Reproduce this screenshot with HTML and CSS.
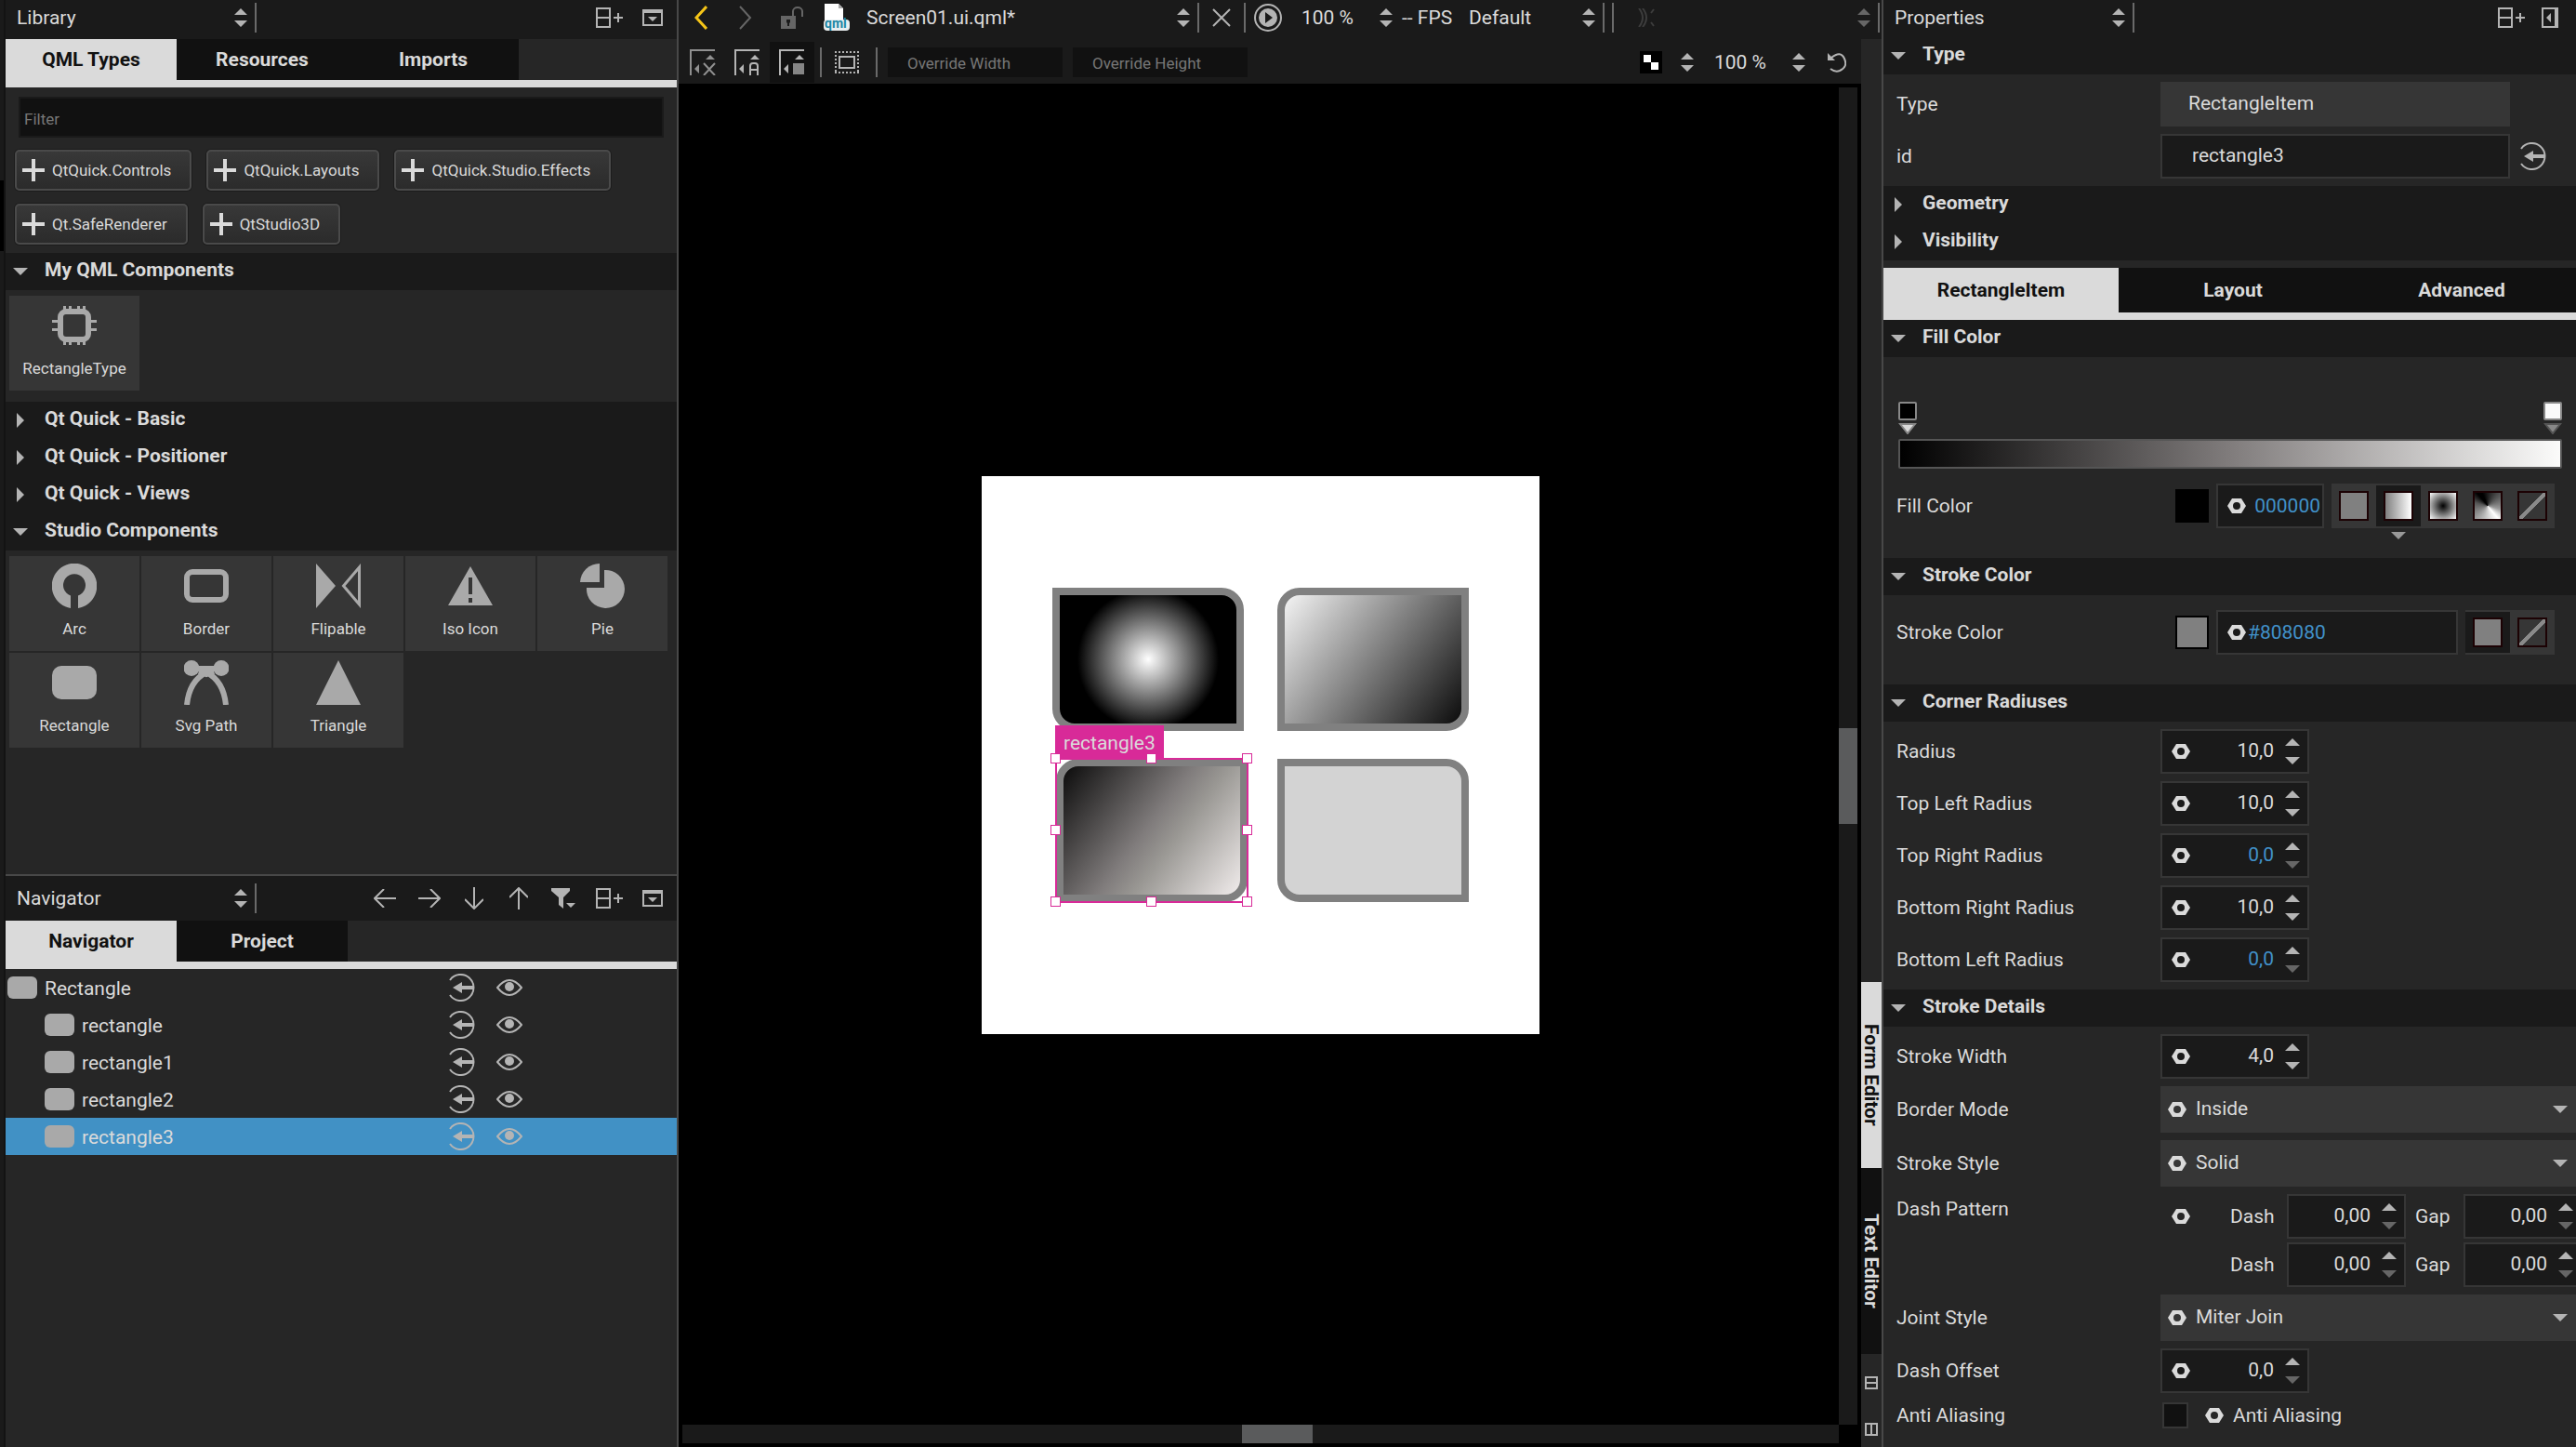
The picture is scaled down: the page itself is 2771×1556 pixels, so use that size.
FILE: index.html
```html
<!DOCTYPE html>
<html lang="en">
<head>
<meta charset="utf-8">
<title>Screen01.ui.qml - Design</title>
<link rel="stylesheet" href="styles.css">
</head>
<body>
<svg class="defs" aria-hidden="true">
  <symbol id="updown" viewBox="0 0 14 20"><path d="M7 0l7 7H0zM0 13h14l-7 7z"/></symbol>
  <symbol id="down" viewBox="0 0 16 8"><path d="M0 0h16L8 8z"/></symbol>
  <symbol id="up" viewBox="0 0 16 8"><path d="M0 8h16L8 0z"/></symbol>
  <symbol id="right" viewBox="0 0 8 16"><path d="M0 0l8 8-8 8z"/></symbol>
  <symbol id="split" viewBox="-4 0 34 24"><path d="M1 2h14v20H1zM1 12h14M19 12h10M24 7v10" fill="none" stroke="currentColor" stroke-width="2"/></symbol>
  <symbol id="minimize" viewBox="0 0 22 18"><path d="M1 1h20v16H1z" fill="none" stroke="currentColor" stroke-width="2"/><path d="M0 0h22v4H0zM6 8h10l-5 5z"/></symbol>
  <symbol id="collapse" viewBox="0 0 18 22"><path d="M1 1h14v20H1z" fill="none" stroke="currentColor" stroke-width="2"/><path d="M14 0h4v22h-4zM10 6v10l-5-5z"/></symbol>
  <symbol id="plus" viewBox="0 0 24 24"><path d="M10 0h4v10h10v4H14v10h-4V14H0v-4h10z"/></symbol>
  <symbol id="arrow" viewBox="0 0 24 20"><path d="M11 0L1 10l10 10M1 10h23" fill="none" stroke="currentColor" stroke-width="2"/></symbol>
  <symbol id="filter" viewBox="0 0 26 22"><path d="M0 0h20v3l-7 7v12l-5-4v-8L0 3zM16 16h10l-5 5z"/></symbol>
  <symbol id="export" viewBox="0 0 32 30"><path d="M2 7a14 14 0 1 1 0 16" fill="none" stroke="currentColor" stroke-width="2"/><path d="M5 15l10-6v4h12v4H15v4z"/></symbol>
  <symbol id="eye" viewBox="0 0 28 18"><path d="M1 9Q14-7 27 9Q14 25 1 9z" fill="none" stroke="currentColor" stroke-width="2"/><circle cx="14" cy="8" r="5"/></symbol>
  <symbol id="hex" viewBox="0 0 20 16"><path fill-rule="evenodd" d="M5 0h10l5 8-5 8H5L0 8zM10 4a4 4 0 1 0 0 8a4 4 0 0 0 0-8z"/></symbol>
</svg>
<div class="app">
  <aside class="left">
    <div class="strip"><i></i></div>
    <div class="dock">
      <section class="library">
        <header class="bar">
          <div class="combo dockname"><select aria-label="Upper view"><option>Library</option></select><svg class="ud"><use href="#updown"/></svg></div>
          <span class="sep"></span><span class="fill"></span>
          <button class="tool" aria-label="Split"><svg width="34" height="24"><use href="#split"/></svg></button>
          <button class="tool" aria-label="Close"><svg width="22" height="18"><use href="#minimize"/></svg></button>
        </header>
        <nav class="tabs"><button class="on">QML Types</button><button>Resources</button><button>Imports</button></nav>
        <div class="filter"><input type="text" placeholder="Filter" aria-label="Filter"></div>
        <div class="imports">
          <button><svg><use href="#plus"/></svg>QtQuick.Controls</button>
          <button><svg><use href="#plus"/></svg>QtQuick.Layouts</button>
          <button><svg><use href="#plus"/></svg>QtQuick.Studio.Effects</button>
          <button><svg><use href="#plus"/></svg>Qt.SafeRenderer</button>
          <button><svg><use href="#plus"/></svg>QtStudio3D</button>
        </div>
        <h2><svg class="tri"><use href="#down"/></svg>My QML Components</h2>
        <div class="tiles">
          <button><svg viewBox="0 0 48 48"><rect x="9" y="9" width="30" height="30" rx="6" fill="none" stroke="currentColor" stroke-width="6"/><path d="M12 3h3v6h-3zM18 3h3v6h-3zM27 3h3v6h-3zM33 3h3v6h-3zM12 39h3v6h-3zM18 39h3v6h-3zM27 39h3v6h-3zM33 39h3v6h-3zM0 18h7v3H0zM0 27h7v3H0zM41 18h7v3h-7zM41 27h7v3h-7z"/></svg>RectangleType</button>
        </div>
        <h2><svg class="tri side"><use href="#right"/></svg>Qt Quick - Basic</h2>
        <h2><svg class="tri side"><use href="#right"/></svg>Qt Quick - Positioner</h2>
        <h2><svg class="tri side"><use href="#right"/></svg>Qt Quick - Views</h2>
        <h2><svg class="tri"><use href="#down"/></svg>Studio Components</h2>
        <div class="tiles">
          <button><svg viewBox="0 0 48 48"><path d="M20 48V34.500a12 12 0 1 1 8 0V48A24.300 24.300 0 1 0 20 48z"/></svg>Arc</button>
          <button><svg viewBox="0 0 48 48"><rect x="3" y="9" width="42" height="30" rx="6" fill="none" stroke="currentColor" stroke-width="6"/></svg>Border</button>
          <button><svg viewBox="0 0 48 48"><path d="M0 0l21 24L0 48z"/><path d="M46.500 4v40L29.500 24z" fill="none" stroke="currentColor" stroke-width="3"/></svg>Flipable</button>
          <button><svg viewBox="0 0 48 48"><path fill-rule="evenodd" d="M24 3l24 42H0zM22 15v18h4V15zM22 37v5h4v-5z"/></svg>Iso Icon</button>
          <button><svg viewBox="0 0 48 48"><path d="M21 0v20H0A21 21 0 0 1 21 0z"/><path d="M26 7a20.500 20.500 0 1 1-19 19h19z"/></svg>Pie</button>
          <button><svg viewBox="0 0 48 48"><rect y="6" width="48" height="36" rx="10"/></svg>Rectangle</button>
          <button><svg viewBox="0 0 48 48"><circle cx="8" cy="8.500" r="8.500"/><circle cx="40" cy="8.500" r="8.500"/><path d="M10 6h28v6H10z"/><path d="M3 48C5 28 14 18 24 13C34 18 43 28 45 48M16 12l8 3 8-3" fill="none" stroke="currentColor" stroke-width="6"/></svg>Svg Path</button>
          <button><svg viewBox="0 0 48 48"><path d="M24 0l24 48H0z"/></svg>Triangle</button>
        </div>
      </section>
      <section class="navigator">
        <header class="bar">
          <div class="combo dockname"><select aria-label="Lower view"><option>Navigator</option></select><svg class="ud"><use href="#updown"/></svg></div>
          <span class="sep"></span><span class="fill"></span>
          <button class="tool" aria-label="Move out"><svg width="24" height="20"><use href="#arrow"/></svg></button>
          <button class="tool flip" aria-label="Move in"><svg width="24" height="20"><use href="#arrow"/></svg></button>
          <button class="tool turn-down" aria-label="Move down"><svg width="24" height="20"><use href="#arrow"/></svg></button>
          <button class="tool turn-up" aria-label="Move up"><svg width="24" height="20"><use href="#arrow"/></svg></button>
          <button class="tool" aria-label="Filter tree"><svg width="26" height="22"><use href="#filter"/></svg></button>
          <button class="tool" aria-label="Split"><svg width="34" height="24"><use href="#split"/></svg></button>
          <button class="tool" aria-label="Close"><svg width="22" height="18"><use href="#minimize"/></svg></button>
        </header>
        <nav class="tabs"><button class="on">Navigator</button><button>Project</button></nav>
        <ul class="tree">
          <li class="root"><i></i><span>Rectangle</span><button aria-label="Export"><svg width="32" height="30"><use href="#export"/></svg></button><button aria-label="Visible"><svg width="28" height="18"><use href="#eye"/></svg></button></li>
          <li><i></i><span>rectangle</span><button aria-label="Export"><svg width="32" height="30"><use href="#export"/></svg></button><button aria-label="Visible"><svg width="28" height="18"><use href="#eye"/></svg></button></li>
          <li><i></i><span>rectangle1</span><button aria-label="Export"><svg width="32" height="30"><use href="#export"/></svg></button><button aria-label="Visible"><svg width="28" height="18"><use href="#eye"/></svg></button></li>
          <li><i></i><span>rectangle2</span><button aria-label="Export"><svg width="32" height="30"><use href="#export"/></svg></button><button aria-label="Visible"><svg width="28" height="18"><use href="#eye"/></svg></button></li>
          <li class="selected"><i></i><span>rectangle3</span><button aria-label="Export"><svg width="32" height="30"><use href="#export"/></svg></button><button aria-label="Visible"><svg width="28" height="18"><use href="#eye"/></svg></button></li>
        </ul>
      </section>
    </div>
  </aside>

  <main class="center">
    <header class="bar docbar">
      <button class="tool back" aria-label="Back"><svg width="14" height="26" viewBox="0 0 14 26"><path d="M13 1L2 13l11 12" fill="none" stroke="currentColor" stroke-width="3"/></svg></button>
      <button class="tool dim" aria-label="Forward"><svg width="14" height="26" viewBox="0 0 14 26"><path d="M1 1l11 12L1 25" fill="none" stroke="currentColor" stroke-width="2"/></svg></button>
      <button class="tool dim lock" aria-label="Unlocked"><svg width="24" height="24" viewBox="0 0 24 24"><path fill-rule="evenodd" d="M0 10h16v14H0zM6 14v3l1 1v3h2v-3l1-1v-3z"/><path d="M13 10V5a5 4 0 0 1 10 0v6" fill="none" stroke="currentColor" stroke-width="2"/></svg></button>
      <svg class="file" width="28" height="30" viewBox="0 0 28 30"><path d="M1 0h15l5 5v22H1z" fill="#fff"/><path d="M16 0v5h5z" fill="#aaa"/><rect y="17" width="28" height="12" rx="4" fill="#e8eef0"/><text x="1" y="26">qml</text></svg>
      <div class="combo doc"><select aria-label="Document"><option>Screen01.ui.qml*</option></select><svg class="ud"><use href="#updown"/></svg></div>
      <span class="sep"></span>
      <button class="tool" aria-label="Close document"><svg width="20" height="20" viewBox="0 0 20 20"><path d="M1 1l18 18M19 1L1 19" fill="none" stroke="currentColor" stroke-width="2"/></svg></button>
      <span class="sep tight"></span>
      <button class="tool" aria-label="Live preview"><svg width="30" height="30" viewBox="0 0 30 30"><circle cx="15" cy="15" r="14" fill="none" stroke="currentColor" stroke-width="2"/><path fill-rule="evenodd" d="M15 5a10 10 0 1 0 0 20a10 10 0 0 0 0-20zM12 9l8 6-8 6z"/></svg></button>
      <div class="combo pct"><select aria-label="Preview zoom"><option>100 %</option></select><svg class="ud"><use href="#updown"/></svg></div>
      <span class="fps">-- FPS</span>
      <div class="combo lang"><select aria-label="Language"><option>Default</option></select><svg class="ud"><use href="#updown"/></svg></div>
      <span class="sep"></span><span class="sep"></span>
      <svg class="crumb" width="18" height="20" viewBox="0 0 18 20"><path d="M1 0q8 10 0 20M5 0q8 10 0 20M17 1l-3 4M17 19l-3-4" fill="none" stroke="currentColor" stroke-width="2"/></svg>
      <span class="fill"></span>
      <svg class="ud faint"><use href="#updown"/></svg><span class="sep"></span>
    </header>
    <div class="work">
      <div class="editor">
        <div class="formbar">
          <button class="tool" aria-label="No snapping"><svg class="muted" width="28" height="28" viewBox="0 0 28 28"><path d="M1 28V1h26M15 15l12 13M27 15L15 28" fill="none" stroke="currentColor" stroke-width="2"/><path d="M17 11h10l-5-5zM10 16v10l-5-5z"/></svg></button>
          <button class="tool" aria-label="Snap with anchors"><svg width="28" height="28" viewBox="0 0 28 28"><path d="M1 28V1h26M17 28V18q0-3 3-3h2q3 0 3 3v10M17 22h8" fill="none" stroke="currentColor" stroke-width="2"/><path d="M17 11h10l-5-5zM10 16v10l-5-5z"/></svg></button>
          <button class="tool pressed" aria-label="Snap"><svg width="28" height="28" viewBox="0 0 28 28"><path d="M1 28V1h26" fill="none" stroke="currentColor" stroke-width="2"/><path d="M17 11h10l-5-5zM10 16v10l-5-5z"/><path d="M15 15h12v12H15z" fill="#858585"/></svg></button>
          <span class="sep"></span>
          <button class="tool wide" aria-label="Show bounds"><svg width="26" height="24" viewBox="0 0 26 24"><path d="M0 1h26M0 23h26M1 0v24M25 0v24" stroke="currentColor" stroke-width="2" stroke-dasharray="2 2"/><path d="M5 6h16v12H5z" fill="none" stroke="currentColor" stroke-width="2"/></svg></button>
          <span class="sep tight"></span>
          <input type="text" placeholder="Override Width" aria-label="Override Width">
          <input type="text" placeholder="Override Height" aria-label="Override Height">
          <span class="fill"></span>
          <svg class="checker" width="24" height="24" viewBox="0 0 24 24"><path d="M0 0h24v24H0z" fill="#000"/><path d="M4 4h8v8h8v8h-8v-8H4z" fill="#fff"/></svg>
          <svg class="ud"><use href="#updown"/></svg>
          <div class="combo zoom"><select aria-label="Zoom"><option>100 %</option></select><svg class="ud"><use href="#updown"/></svg></div>
          <button class="tool" aria-label="Reset view"><svg width="20" height="22" viewBox="0 0 20 22"><path d="M4 6Q14-2 18 7T13 20Q8 22 3 18" fill="none" stroke="currentColor" stroke-width="2"/><path d="M0 1v8h8z"/></svg></button>
        </div>
        <div class="canvas">
          <div class="stage">
            <div class="artboard">
              <div class="shape radial"></div>
              <div class="shape linear"></div>
              <div class="shape flat"></div>
              <div class="shape picked"></div>
              <div class="selection">
                <span class="tag">rectangle3</span>
                <i class="t l"></i><i class="t c"></i><i class="t r"></i><i class="m l"></i><i class="m r"></i><i class="b l"></i><i class="b c"></i><i class="b r"></i>
              </div>
            </div>
          </div>
          <div class="track vert"><i></i></div>
          <div class="track horz"><i></i></div>
        </div>
      </div>
      <nav class="modes">
        <button class="on">Form Editor</button>
        <button>Text Editor</button>
        <div class="splits">
          <button aria-label="Split horizontally"><svg width="14" height="14" viewBox="0 0 14 14"><path d="M1 1h12v12H1zM1 7h12" fill="none" stroke="currentColor" stroke-width="2"/></svg></button>
          <button aria-label="Split vertically"><svg width="14" height="14" viewBox="0 0 14 14"><path d="M1 1h12v12H1zM7 1v12" fill="none" stroke="currentColor" stroke-width="2"/></svg></button>
        </div>
      </nav>
    </div>
  </main>

  <aside class="props">
    <header class="bar">
      <div class="combo dockname"><select aria-label="Right view"><option>Properties</option></select><svg class="ud"><use href="#updown"/></svg></div>
      <span class="sep"></span><span class="fill"></span>
      <button class="tool" aria-label="Split"><svg width="34" height="24"><use href="#split"/></svg></button>
      <button class="tool" aria-label="Collapse"><svg width="18" height="22"><use href="#collapse"/></svg></button>
    </header>
    <h2><svg class="tri"><use href="#down"/></svg>Type</h2>
    <div class="body">
      <div class="row"><label for="type">Type</label><input class="text ro" id="type" type="text" value="RectangleItem" readonly></div>
      <div class="row"><label for="id">id</label><input class="text" id="id" type="text" value="rectangle3"><button class="export" aria-label="Export as alias"><svg width="32" height="30"><use href="#export"/></svg></button></div>
    </div>
    <h2><svg class="tri side"><use href="#right"/></svg>Geometry</h2>
    <h2><svg class="tri side"><use href="#right"/></svg>Visibility</h2>
    <nav class="tabs even"><button class="on">RectangleItem</button><button>Layout</button><button>Advanced</button></nav>
    <h2><svg class="tri"><use href="#down"/></svg>Fill Color</h2>
    <div class="body fillcolor">
      <div class="stops">
        <button aria-label="Black stop"><i class="black"></i><svg viewBox="0 0 20 12"><path d="M2 1h16l-8 10z" stroke="#888" stroke-width="2"/></svg></button>
        <button aria-label="White stop"><i class="white"></i><svg viewBox="0 0 20 12"><path d="M2 1h16l-8 10z" fill="#888" stroke="#555" stroke-width="2"/></svg></button>
      </div>
      <div class="ramp"></div>
      <div class="row"><label for="fill">Fill Color</label>
        <div class="color"><i class="swatch black"></i><div class="hexbox short"><svg class="hex"><use href="#hex"/></svg><input id="fill" type="text" value="000000"></div>
          <div class="kinds"><button aria-label="Solid"><i class="solid"></i></button><button class="on" aria-label="Linear"><i class="lin"></i></button><button aria-label="Radial"><i class="rad"></i></button><button aria-label="Conical"><i class="con"></i></button><button aria-label="None"><i class="none"></i></button></div></div>
      </div>
    </div>
    <h2><svg class="tri"><use href="#down"/></svg>Stroke Color</h2>
    <div class="body strokecolor">
      <div class="row"><label for="stroke">Stroke Color</label>
        <div class="color"><i class="swatch"></i><div class="hexbox"><svg class="hex"><use href="#hex"/></svg><input id="stroke" type="text" value="#808080"></div>
          <div class="kinds"><button class="on" aria-label="Solid"><i class="solid"></i></button><button aria-label="None"><i class="none"></i></button></div></div>
      </div>
    </div>
    <h2><svg class="tri"><use href="#down"/></svg>Corner Radiuses</h2>
    <div class="body">
      <div class="row"><label for="r0">Radius</label><div class="spin"><svg class="hex"><use href="#hex"/></svg><input id="r0" type="text" value="10,0"><span class="steps"><svg><use href="#up"/></svg><svg><use href="#down"/></svg></span></div></div>
      <div class="row"><label for="r1">Top Left Radius</label><div class="spin"><svg class="hex"><use href="#hex"/></svg><input id="r1" type="text" value="10,0"><span class="steps"><svg><use href="#up"/></svg><svg><use href="#down"/></svg></span></div></div>
      <div class="row"><label for="r2">Top Right Radius</label><div class="spin zero set"><svg class="hex"><use href="#hex"/></svg><input id="r2" type="text" value="0,0"><span class="steps"><svg><use href="#up"/></svg><svg><use href="#down"/></svg></span></div></div>
      <div class="row"><label for="r3">Bottom Right Radius</label><div class="spin"><svg class="hex"><use href="#hex"/></svg><input id="r3" type="text" value="10,0"><span class="steps"><svg><use href="#up"/></svg><svg><use href="#down"/></svg></span></div></div>
      <div class="row"><label for="r4">Bottom Left Radius</label><div class="spin zero set"><svg class="hex"><use href="#hex"/></svg><input id="r4" type="text" value="0,0"><span class="steps"><svg><use href="#up"/></svg><svg><use href="#down"/></svg></span></div></div>
    </div>
    <h2><svg class="tri"><use href="#down"/></svg>Stroke Details</h2>
    <div class="body">
      <div class="row"><label for="sw">Stroke Width</label><div class="spin"><svg class="hex"><use href="#hex"/></svg><input id="sw" type="text" value="4,0"><span class="steps"><svg><use href="#up"/></svg><svg><use href="#down"/></svg></span></div></div>
      <div class="row"><label for="bm">Border Mode</label><div class="drop"><svg class="hex"><use href="#hex"/></svg><select id="bm"><option>Inside</option></select><svg class="tri"><use href="#down"/></svg></div></div>
      <div class="row"><label for="ss">Stroke Style</label><div class="drop"><svg class="hex"><use href="#hex"/></svg><select id="ss"><option>Solid</option></select><svg class="tri"><use href="#down"/></svg></div></div>
      <div class="row dashes"><span class="label">Dash Pattern</span>
        <div class="pairs">
          <svg class="hex"><use href="#hex"/></svg><label for="d1">Dash</label><div class="spin zero"><input id="d1" type="text" value="0,00"><span class="steps"><svg><use href="#up"/></svg><svg><use href="#down"/></svg></span></div><label for="g1">Gap</label><div class="spin zero"><input id="g1" type="text" value="0,00"><span class="steps"><svg><use href="#up"/></svg><svg><use href="#down"/></svg></span></div>
          <span></span><label for="d2">Dash</label><div class="spin zero"><input id="d2" type="text" value="0,00"><span class="steps"><svg><use href="#up"/></svg><svg><use href="#down"/></svg></span></div><label for="g2">Gap</label><div class="spin zero"><input id="g2" type="text" value="0,00"><span class="steps"><svg><use href="#up"/></svg><svg><use href="#down"/></svg></span></div>
        </div></div>
      <div class="row"><label for="js">Joint Style</label><div class="drop"><svg class="hex"><use href="#hex"/></svg><select id="js"><option>Miter Join</option></select><svg class="tri"><use href="#down"/></svg></div></div>
      <div class="row"><label for="do">Dash Offset</label><div class="spin zero"><svg class="hex"><use href="#hex"/></svg><input id="do" type="text" value="0,0"><span class="steps"><svg><use href="#up"/></svg><svg><use href="#down"/></svg></span></div></div>
      <div class="row check"><span class="label">Anti Aliasing</span><input id="aa" type="checkbox"><svg class="hex"><use href="#hex"/></svg><label for="aa">Anti Aliasing</label></div>
    </div>
  </aside>
</div>
</body>
</html>
```
FILE: styles.css
```css
:root {
  --bg: #262626;
  --dark: #1a1a1a;
  --darker: #111;
  --raised: #363636;
  --light: #dadada;
  --icon: #b4b4b4;
  --line: #484848;
  --accent: #4191c9;
  --pink: #d82a98;
}
* { box-sizing: border-box; }
body {
  margin: 0;
  background: var(--bg);
  color: var(--light);
  font: 400 21px/24px Roboto, "Noto Sans", sans-serif;
}
button, input, select { font: inherit; color: inherit; }
button { border: 0; padding: 0; background: none; }
input { border: 0; min-width: 0; }
select {
  appearance: none;
  border: 0;
  padding: 0;
  background: none;
  flex: 1;
  min-width: 0;
}
svg { display: block; flex: none; fill: currentColor; }
.defs { display: none; }
i { display: block; flex: none; }

.app {
  display: grid;
  grid-template-columns: 730px minmax(0, 1fr) 747px;
  min-height: 100vh;
}

/* shared bars */
.bar {
  display: flex;
  align-items: center;
  height: 42px;
  padding: 0 2px 4px 12px;
  background: var(--dark);
}
.combo { display: flex; align-items: center; }
.dockname { width: 248px; }
.ud { width: 14px; height: 20px; color: var(--icon); }
.sep { width: 2px; height: 32px; margin-left: 8px; background: #6a6a6a; }
.fill { flex: 1; }
.tool {
  display: grid;
  place-items: center;
  width: 48px;
  height: 40px;
  color: var(--icon);
}
.flip svg { transform: rotate(180deg); }
.turn-down svg { transform: rotate(-90deg); }
.turn-up svg { transform: rotate(90deg); }
.dim, .faint { color: #666; }

.tabs { display: flex; border-bottom: 8px solid var(--light); }
.tabs button {
  width: 184px;
  height: 44px;
  background: var(--darker);
  font-weight: 700;
}
.tabs .on, .modes .on { background: var(--light); color: #111; }

h2 {
  display: flex;
  align-items: center;
  gap: 18px;
  height: 40px;
  margin: 0;
  padding: 0 8px 4px;
  background: var(--dark);
  font-size: 21px;
  font-weight: 700;
}
.tri { width: 16px; height: 8px; color: var(--icon); }
h2 .tri { margin-top: 4px; }
.tri.side { height: 16px; }

/* left docks */
.left {
  display: grid;
  grid-template-columns: 6px minmax(0, 1fr);
  border-right: 2px solid var(--line);
}
.strip { padding-top: 194px; background: var(--dark); border-right: 2px solid #131313; }
.strip i { height: 76px; background: #000; }
.dock { display: grid; grid-template-rows: 942px 1fr; }
.library { border-bottom: 2px solid var(--line); }
.filter { padding: 10px 14px; }
.filter input {
  width: 100%;
  height: 44px;
  padding: 4px 4px 0;
  background: var(--darker);
  border: 2px solid var(--dark);
  font-size: 17px;
}
::placeholder { color: #777; opacity: 1; }
.imports {
  display: flex;
  flex-wrap: wrap;
  gap: 14px 16px;
  padding: 3px 10px 9px;
}
.imports button {
  display: flex;
  align-items: center;
  gap: 8px;
  height: 44px;
  padding: 0 20px 0 6px;
  border: 2px solid #4a4a4a;
  border-radius: 5px;
  background: linear-gradient(#383838, #2b2b2b);
  box-shadow: 0 0 0 1px #1c1c1c;
  font-size: 17px;
}
.imports svg { width: 24px; height: 24px; }
.tiles {
  display: flex;
  flex-wrap: wrap;
  gap: 2px;
  padding: 6px 4px 12px;
}
.tiles button {
  display: flex;
  flex-direction: column;
  align-items: center;
  justify-content: space-between;
  width: 140px;
  height: 102px;
  padding: 8px 0 12px;
  background: var(--raised);
  font-size: 17px;
}
.tiles svg { width: 48px; height: 48px; color: #a9a9a9; }
.navigator .bar { height: 48px; padding-bottom: 0; }
.tree { margin: 0; padding: 0; list-style: none; }
.tree li {
  display: flex;
  align-items: center;
  height: 40px;
  padding: 0 166px 0 42px;
}
.tree .root { padding-left: 2px; }
.tree i { width: 32px; height: 24px; border-radius: 6px; background: #a9a9a9; }
.tree span { flex: 1; padding: 2px 0 0 8px; }
.tree button { margin-left: 20px; color: var(--icon); }
.tree .selected { background: #4191c5; }

/* center */
.center { display: flex; flex-direction: column; min-width: 0; }
.docbar { padding-left: 0; }
.back { color: #f5c518; }
.lock { width: 52px; }
.file { margin-left: 8px; }
.file text { font: 700 14px Roboto, sans-serif; fill: #1b87a6; }
.doc { width: 348px; margin-left: 18px; }
.sep.tight { margin-left: 0; }
.pct { width: 98px; margin-left: 12px; }
.fps { width: 72px; margin-left: 10px; }
.lang { width: 136px; }
.crumb { margin-left: 26px; color: #3c3c3c; }
.work { display: grid; grid-template-columns: minmax(0, 1fr) 22px; flex: 1; }
.editor { display: flex; flex-direction: column; }
.formbar {
  display: flex;
  align-items: center;
  height: 48px;
  padding: 2px 2px 0;
  background: var(--dark);
}
.formbar .tool { height: 44px; }
.formbar .sep { margin-left: 6px; }
.formbar .tight { margin-left: 0; }
.formbar .wide { width: 58px; padding-right: 4px; }
.muted { color: #909090; }
.pressed { background: var(--darker); }
.formbar input {
  width: 188px;
  height: 32px;
  margin-left: 11px;
  padding: 2px 21px 0;
  background: var(--darker);
  font-size: 17px;
}
.formbar .checker { margin-right: 20px; }
.zoom { width: 98px; margin: 0 10px 0 22px; }
.canvas {
  display: grid;
  grid-template: minmax(0, 1fr) 20px / minmax(0, 1fr) 20px;
  flex: 1;
  padding: 4px;
  background: #000;
}
.stage { display: grid; place-items: center; padding-bottom: 2px; }
.track { display: flex; background: var(--dark); }
.track::before, .track::after { content: ""; }
.track i { background: #5a5b5c; }
.vert { flex-direction: column; }
.vert::before { flex: 689; }
.vert i { flex: 103; }
.vert::after { flex: 646; }
.horz::before { flex: 602; }
.horz i { flex: 76; }
.horz::after { flex: 566; }

.artboard { position: relative; width: 600px; height: 600px; background: #fff; }
.shape {
  position: absolute;
  width: 206px;
  height: 154px;
  border: 8px solid #808080;
  background-origin: border-box;
}
.radial { left: 76px; top: 120px; border-radius: 0 24px 0 24px; background-image: radial-gradient(circle 76px, #fff, #000); }
.linear { left: 318px; top: 120px; border-radius: 24px 0; background-image: linear-gradient(127deg, #fff, #000); }
.flat { left: 318px; top: 304px; border-radius: 0 24px; background: #d3d3d3; }
.picked { left: 80px; top: 304px; border-radius: 24px 0; background-image: linear-gradient(127deg, #000, #807c7c 48%, #9a9894 60%, #fbf6f6); }
.selection {
  position: absolute;
  left: 79px;
  top: 303px;
  width: 208px;
  height: 156px;
  border: 2px solid var(--pink);
}
.selection i {
  position: absolute;
  width: 11px;
  height: 11px;
  margin: -6px;
  border: 1px solid var(--pink);
  background: #fff;
}
.selection .t { top: 0; margin-top: -7px; }
.selection .m { top: 50%; }
.selection .b { top: 100%; margin-top: -5px; }
.selection .l { left: 0; margin-left: -7px; }
.selection .c { left: 50%; }
.selection .r { left: 100%; margin-left: -5px; }
.tag {
  position: absolute;
  left: -2px;
  bottom: 100%;
  padding: 7px 9px 6px;
  background: var(--pink);
}

.modes { display: flex; flex-direction: column; justify-content: flex-end; }
.modes > button {
  height: 200px;
  background: var(--darker);
  font-weight: 700;
  line-height: 22px;
  writing-mode: vertical-rl;
}
.splits {
  display: grid;
  justify-items: center;
  align-content: center;
  gap: 36px;
  height: 100px;
  padding-top: 12px;
  color: var(--icon);
}

/* properties */
.props { border-left: 2px solid var(--line); min-width: 0; overflow: hidden; }
.props .bar { height: 40px; padding-bottom: 2px; }
.props .bar .tool { width: 50px; }
.props .bar .tool:last-child { margin-right: 8px; width: 36px; }
.body { display: grid; grid-template-columns: minmax(0, 1fr); gap: 8px; padding: 8px 0; }
.row { display: flex; align-items: center; padding-left: 14px; }
.row > label:first-child, .row > .label { flex: none; width: 284px; }
.text {
  width: 376px;
  height: 48px;
  padding: 0 32px 2px;
  background: var(--dark);
  border: 2px solid var(--raised);
}
.text.ro { padding: 0 28px 2px; background: var(--raised); }
.export { margin-left: 10px; color: var(--icon); }
.tabs.even { display: grid; grid-template-columns: 253px 1fr 1fr; margin-top: 8px; }
.tabs.even button { width: auto; height: 48px; }
.hex { width: 20px; height: 16px; }

.fillcolor { gap: 0; padding: 48px 0 32px; }
.stops { display: flex; justify-content: space-between; padding: 0 15px 0 16px; }
.stops button { display: grid; gap: 3px; justify-items: center; }
.stops svg { width: 20px; height: 12px; }
.stops i { width: 20px; height: 20px; border: 2px solid #888; border-radius: 2px; }
.black { background: #000; }
.white { background: #fafafa; }
.ramp {
  height: 32px;
  margin: 5px 15px 16px 16px;
  border: 2px solid #555;
  border-radius: 2px;
  background: linear-gradient(90deg, #000, #807c7c 50%, #fbfbfa);
}
.color { display: flex; align-items: center; gap: 8px; padding-left: 16px; }
.swatch { width: 36px; height: 36px; border: 2px solid #000; background: #808080; }
.swatch.black { background: #000; }
.hexbox {
  display: flex;
  align-items: center;
  width: 260px;
  height: 48px;
  padding-left: 10px;
  border: 2px solid var(--raised);
  background: var(--dark);
}
.hexbox input { flex: 1; padding: 0 0 0 2px; background: none; color: var(--accent); }
.hexbox.short { width: 116px; }
.short input { text-align: right; padding-right: 2px; }
.kinds { display: flex; height: 48px; padding: 2px 0; background: var(--raised); }
.kinds button { display: grid; place-items: center; width: 48px; }
.kinds .on { position: relative; background: var(--dark); }
.fillcolor .on::after {
  content: "";
  position: absolute;
  top: 100%;
  width: 16px;
  height: 8px;
  margin-top: 6px;
  background: #999;
  clip-path: polygon(0 0, 100% 0, 50% 100%);
}
.kinds i { width: 32px; height: 32px; border: 2px solid #1c0204; }
.solid { background: #808080; }
.lin { background: linear-gradient(90deg, #808080, #fff); }
.rad { background: radial-gradient(circle, #000, #fff 20px); }
.con { background: conic-gradient(from 140deg, #fff, #555 40%, #000 50%, #000 55%, #999 90%, #fff); }
.none { background: linear-gradient(135deg, var(--raised) 45%, #8a8a8a 45%, #8a8a8a 56%, var(--raised) 56%); }
.strokecolor { padding: 16px 0 32px; }

.spin {
  display: flex;
  align-items: center;
  width: 160px;
  height: 48px;
  padding: 0 8px 0 10px;
  border: 2px solid var(--raised);
  background: var(--dark);
}
.spin input { flex: 1; width: 0; padding: 0 12px 2px 0; background: none; text-align: right; }
.set input { color: var(--accent); }
.steps { display: grid; gap: 12px; color: var(--icon); }
.steps svg { width: 16px; height: 8px; }
.zero .steps svg:last-child { color: #666; }
.drop {
  display: flex;
  flex: 1;
  align-items: center;
  height: 50px;
  padding: 0 9px 0 8px;
  background: var(--raised);
}
.drop select { padding: 0 10px 2px; }
.row.dashes { align-items: flex-start; }
.dashes .label { padding-top: 4px; }
.pairs {
  display: grid;
  flex: none;
  grid-template-columns: 75px 61px 138px 52px 128px;
  row-gap: 4px;
  align-items: center;
}
.pairs .hex { margin-left: 12px; }
.pairs .spin { width: 128px; }
.check { height: 32px; }
.check input {
  appearance: none;
  width: 28px;
  height: 28px;
  margin: 0 18px 0 2px;
  border: 2px solid var(--raised);
  background: var(--darker);
}
.check label { padding-left: 10px; }
```
